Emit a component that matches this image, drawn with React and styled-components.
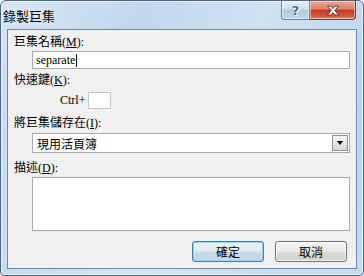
import React from "react";
import styled, { createGlobalStyle } from "styled-components";

const Global = createGlobalStyle`
  html, body { margin: 0; padding: 0; background: #fff; }
  * { box-sizing: border-box; }
`;

const Window = styled.div`
  width: 364px;
  height: 276px;
  border: 1px solid #4d6582;
  border-radius: 6px 6px 4px 4px;
  background:
    linear-gradient(115deg, rgba(255,255,255,0.35) 0%, rgba(255,255,255,0) 30%, rgba(255,255,255,0.25) 55%, rgba(255,255,255,0) 80%),
    linear-gradient(to bottom, #c2d8ee 0%, #bcd4ec 40%, #c6dbf0 100%);
  box-shadow: inset 0 0 0 1px rgba(255,255,255,0.55);
  display: flex;
  flex-direction: column;
  overflow: hidden;
`;

const TitleBar = styled.div`
  height: 28px;
  display: flex;
  justify-content: space-between;
  align-items: flex-start;
  flex-shrink: 0;
`;

const Title = styled.div`
  padding: 8px 0 0 2px;
  font-family: "Noto Sans CJK TC", sans-serif;
  font-size: 13px;
  line-height: 14px;
  color: #000;
  text-shadow: 0 0 6px rgba(255,255,255,0.9);
`;

const CaptionButtons = styled.div`
  display: flex;
  margin-right: 7px;
`;

const CaptionButton = styled.div`
  width: ${p => p.$w}px;
  height: 19px;
  border: 1px solid ${p => (p.$close ? "#7a3a30" : "#6d8197")};
  border-top: none;
  border-radius: ${p => (p.$close ? "0 0 4px 0" : "0 0 0 4px")};
  ${p => (p.$close ? "border-left: none;" : "")}
  background: ${p =>
    p.$close
      ? "linear-gradient(to bottom, #e8a493 0%, #d8846f 45%, #c43b22 50%, #cf5a41 85%, #e08a70 100%)"
      : "linear-gradient(to bottom, #e5eef8 0%, #d0dfee 45%, #b5c9de 50%, #c3d5e7 100%)"};
  box-shadow: inset 0 0 0 1px rgba(255,255,255,0.5);
  display: flex;
  align-items: center;
  justify-content: center;
`;

const HelpGlyph = styled.span`
  font-family: "DejaVu Sans", sans-serif;
  font-size: 13px;
  font-weight: bold;
  line-height: 1;
  color: #5a6878;
  text-shadow: 0 0 1px #fff, 1px 1px 0 #fff;
`;

const Client = styled.div`
  flex: 1;
  margin: 0 6px 6px 6px;
  border: 1px solid #6f88a6;
  background: #f0f0f0;
  padding: 5px 6px 0 6px;
  display: flex;
  flex-direction: column;
  font-family: "Liberation Serif", "Noto Sans CJK TC", serif;
  font-size: 12px;
  color: #000;
`;

const Label = styled.div`
  height: 14px;
  line-height: 14px;
  white-space: nowrap;
  margin-top: ${p => p.$mt || 0}px;
`;

const Indented = styled.div`
  margin-left: 18px;
  margin-top: ${p => p.$mt || 0}px;
`;

const TextBox = styled.div`
  height: ${p => p.$h}px;
  background: #fff;
  border: 1px solid #a7abb0;
  display: flex;
  align-items: ${p => (p.$top ? "flex-start" : "center")};
  padding: 0 3px;
  line-height: 14px;
`;

const Caret = styled.span`
  display: inline-block;
  width: 1px;
  height: 13px;
  background: #000;
  margin-left: 1px;
`;

const CtrlRow = styled.div`
  display: flex;
  align-items: center;
  gap: 3px;
  margin-left: 46px;
  margin-top: 5px;
  height: 17px;
`;

const KeyBox = styled.div`
  width: 23px;
  height: 17px;
  background: #fff;
  border: 1px solid #c3c6ca;
`;

const Select = styled.div`
  height: 20px;
  background: #fff;
  border: 1px solid #a7abb0;
  display: flex;
  align-items: center;
  justify-content: space-between;
  padding: 0 1px 0 4px;
  font-family: "Noto Sans CJK TC", sans-serif;
`;

const DropButton = styled.div`
  width: 16px;
  height: 16px;
  border: 1px solid #8e8f8f;
  background: linear-gradient(to bottom, #f4f4f4 0%, #e6e6e6 50%, #d6d6d6 100%);
  display: flex;
  align-items: center;
  justify-content: center;
`;

const Arrow = styled.div`
  width: 0;
  height: 0;
  border-left: 3.5px solid transparent;
  border-right: 3.5px solid transparent;
  border-top: 4px solid #000;
`;

const ButtonRow = styled.div`
  display: flex;
  justify-content: flex-end;
  gap: 11px;
  margin-top: 10px;
  margin-right: 3px;
`;

const Button = styled.div`
  width: 72px;
  height: 21px;
  border-radius: 3px;
  border: 1px solid ${p => (p.$default ? "#3c7fb1" : "#707070")};
  background: ${p =>
    p.$default
      ? "linear-gradient(to bottom, #eaf3fa 0%, #e0ebf4 48%, #cddcea 52%, #c2d4e4 100%)"
      : "linear-gradient(to bottom, #f2f2f2 0%, #ebebeb 48%, #dddddd 52%, #cfcfcf 100%)"};
  box-shadow: inset 0 0 0 1px ${p => (p.$default ? "#9fd4f2" : "rgba(255,255,255,0.75)")};
  display: flex;
  align-items: center;
  justify-content: center;
  font-family: "Noto Sans CJK TC", sans-serif;
  font-size: 12px;
  line-height: 14px;
`;

export default function App() {
  return (
    <>
      <Global />
      <Window>
        <TitleBar>
          <Title>錄製巨集</Title>
          <CaptionButtons>
            <CaptionButton $w={29}>
              <HelpGlyph>?</HelpGlyph>
            </CaptionButton>
            <CaptionButton $w={46} $close>
              <svg width="14" height="11" viewBox="0 0 14 11">
                <path
                  d="M1.5 1 L5 1 L7 3.5 L9 1 L12.5 1 L8.8 5.5 L12.5 10 L9 10 L7 7.5 L5 10 L1.5 10 L5.2 5.5 Z"
                  fill="#fff"
                  stroke="#5b2a22"
                  strokeWidth="0.9"
                  strokeLinejoin="round"
                />
              </svg>
            </CaptionButton>
          </CaptionButtons>
        </TitleBar>
        <Client>
          <Label>
            巨集名稱(<u>M</u>):
          </Label>
          <Indented $mt={2}>
            <TextBox $h={18}>
              separate<Caret />
            </TextBox>
          </Indented>
          <Label $mt={4}>
            快速鍵(<u>K</u>):
          </Label>
          <CtrlRow>
            <span>Ctrl+</span>
            <KeyBox />
          </CtrlRow>
          <Label $mt={7}>
            將巨集儲存在(<u>I</u>):
          </Label>
          <Indented $mt={3}>
            <Select>
              <span>現用活頁簿</span>
              <DropButton>
                <Arrow />
              </DropButton>
            </Select>
          </Indented>
          <Label $mt={8}>
            描述(<u>D</u>):
          </Label>
          <Indented $mt={2}>
            <TextBox $h={54} $top />
          </Indented>
          <ButtonRow>
            <Button $default>確定</Button>
            <Button>取消</Button>
          </ButtonRow>
        </Client>
      </Window>
    </>
  );
}
